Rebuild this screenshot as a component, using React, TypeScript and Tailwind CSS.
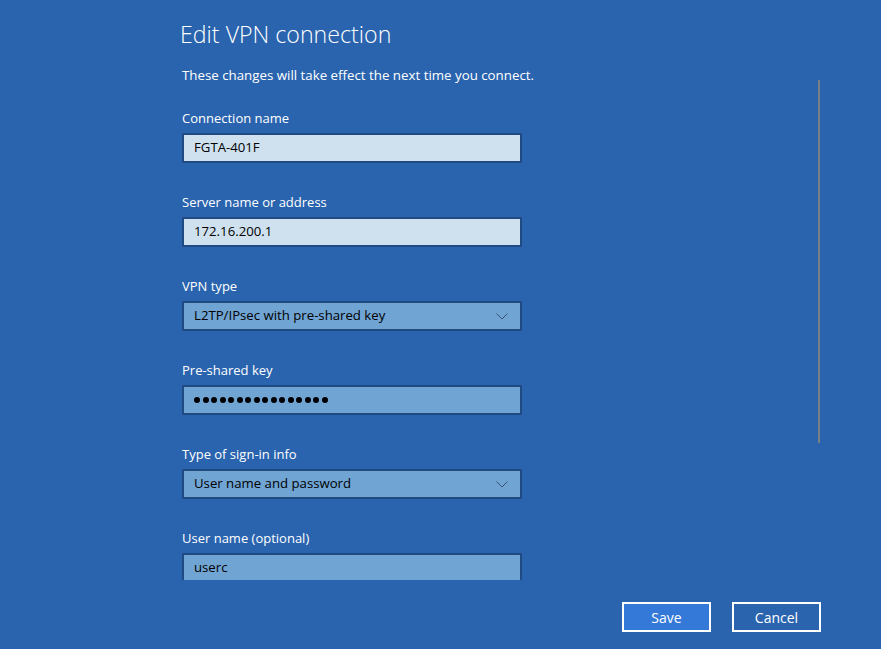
import React from "react";

const font = { fontFamily: '"Segoe UI", "Open Sans", "Noto Sans", sans-serif' };

function Label({ children }: { children: React.ReactNode }) {
  return <div className="h-[18px] leading-[18px] text-[13px] text-white">{children}</div>;
}

function TextBox({ value, light }: { value: React.ReactNode; light?: boolean }) {
  return (
    <div
      className={`mt-[6px] h-[30px] w-[340px] border-2 border-[#1f4a82] flex items-center pl-[10px] text-[13.2px] text-black ${
        light ? "bg-[#cfe0ee]" : "bg-[#70a4d3]"
      }`}
    >
      {value}
    </div>
  );
}

function Select({ value }: { value: string }) {
  return (
    <div className="mt-[6px] h-[30px] w-[340px] border-2 border-[#1f4a82] bg-[#70a4d3] flex items-center justify-between pl-[10px] pr-[12px] text-[13.2px] text-black">
      <span>{value}</span>
      <svg width="12" height="7" viewBox="0 0 12 7" fill="none">
        <path d="M0.5 0.5 L6 6 L11.5 0.5" stroke="#3a5272" strokeWidth="1" />
      </svg>
    </div>
  );
}

function Dots() {
  return (
    <div className="flex items-center gap-[2.5px]">
      {Array.from({ length: 16 }).map((_, i) => (
        <span key={i} className="block w-[6px] h-[6px] rounded-full bg-black" />
      ))}
    </div>
  );
}

export default function App() {
  return (
    <div className="relative w-[881px] h-[649px] bg-[#2a64ae] overflow-hidden" style={font}>
      <div className="pl-[182px] pt-[18px]">
        <div className="-ml-[2px] h-[32px] leading-[32px] text-[23.2px] font-light text-white">Edit VPN connection</div>
        <div className="mt-[16px] h-[18px] leading-[18px] text-[13.3px] text-white">
          These changes will take effect the next time you connect.
        </div>
        <div className="mt-[25px] h-[471px] overflow-hidden flex flex-col gap-[30px]">
          <div>
            <Label>Connection name</Label>
            <TextBox value="FGTA-401F" light />
          </div>
          <div>
            <Label>Server name or address</Label>
            <TextBox value="172.16.200.1" light />
          </div>
          <div>
            <Label>VPN type</Label>
            <Select value="L2TP/IPsec with pre-shared key" />
          </div>
          <div>
            <Label>Pre-shared key</Label>
            <TextBox value={<Dots />} />
          </div>
          <div>
            <Label>Type of sign-in info</Label>
            <Select value="User name and password" />
          </div>
          <div>
            <Label>User name (optional)</Label>
            <TextBox value="userc" />
          </div>
        </div>
      </div>
      <div className="absolute left-[818px] top-[80px] w-[2px] h-[363px] bg-[#7a7f86]" />
      <div className="flex justify-end gap-[21px] pr-[60px] mt-[22px]">
        <button className="w-[89px] h-[30px] border-2 border-white bg-[#3478d8] text-white text-[14px]">Save</button>
        <button className="w-[89px] h-[30px] border-2 border-white bg-[#2a64ae] text-white text-[14px]">Cancel</button>
      </div>
    </div>
  );
}
